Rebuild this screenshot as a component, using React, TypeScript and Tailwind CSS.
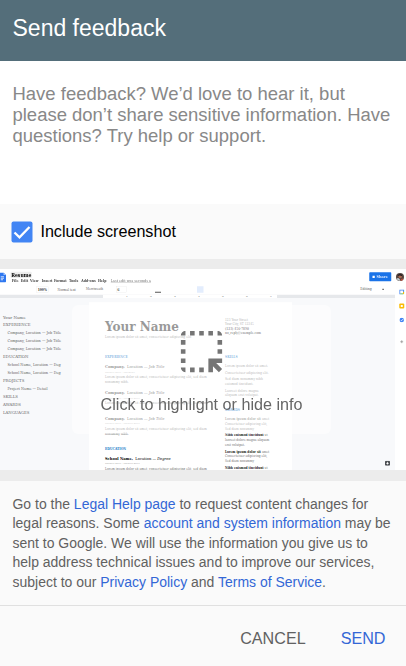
import React from "react";

type Line = { t: React.ReactNode; c: string };

const serif = "font-['DejaVu_Serif','Liberation_Serif',serif]";

const outline: Line[] = [
  { t: "Your Name", c: "text-[16px]" },
  { t: "EXPERIENCE", c: "text-[15.5px]" },
  { t: "Company, Location — Job Title", c: "pl-[18px] text-[13.8px]" },
  { t: "Company, Location — Job Title", c: "pl-[18px] text-[13.8px]" },
  { t: "Company, Location — Job Title", c: "pl-[18px] text-[13.8px]" },
  { t: "EDUCATION", c: "text-[15.5px]" },
  { t: "School Name, Location — Deg", c: "pl-[18px] text-[13.8px]" },
  { t: "School Name, Location — Deg", c: "pl-[18px] text-[13.8px]" },
  { t: "PROJECTS", c: "text-[15.5px]" },
  { t: "Project Name — Detail", c: "pl-[18px] text-[13.8px]" },
  { t: "SKILLS", c: "text-[15.5px]" },
  { t: "AWARDS", c: "text-[15.5px]" },
  { t: "LANGUAGES", c: "text-[15.5px]" },
];

const job = (
  <>
    <b>Company,</b>&nbsp; Location — <i>Job Title</i>
  </>
);
const lorem = "Lorem ipsum dolor sit amet, consectetuer adipiscing elit, sed diam";
const jobC = "h-[20px] text-[14.5px] text-[#333]";
const dateC = "h-[22px] text-[9px] text-[#888]";
const bodyC = "h-[20px] text-[12px] text-[#777]";
const headC = "h-[20px] text-[12px] font-bold text-[#2079c7]";

const mainLines: Line[] = [
  { t: "Your Name", c: "h-[60px] text-[48px] font-bold text-[#333]" },
  { t: "Lorem ipsum dolor sit amet, consectetuer adipiscing elit", c: "h-[20px] mt-[4px] text-[12px] text-[#777]" },
  { t: "EXPERIENCE", c: headC + " mt-[60px]" },
  { t: job, c: jobC + " mt-[17px]" },
  { t: "MONTH 20XX - PRESENT", c: dateC },
  { t: lorem, c: bodyC },
  { t: "nonummy nibh.", c: bodyC },
  { t: job, c: jobC + " mt-[22px]" },
  { t: "MONTH 20XX - MONTH 20XX", c: dateC },
  { t: lorem, c: bodyC },
  { t: job, c: jobC + " mt-[41px]" },
  { t: "MONTH 20XX - MONTH 20XX", c: dateC },
  { t: lorem, c: bodyC },
  { t: "nonummy nibh.", c: bodyC },
  { t: "EDUCATION", c: headC + " mt-[41px]" },
  {
    t: (
      <>
        <b>School Name,</b>&nbsp; Location — <i>Degree</i>
      </>
    ),
    c: "h-[20px] mt-[17px] text-[14.5px] text-black",
  },
  { t: "MONTH 20XX - MONTH 20XX", c: dateC },
  { t: lorem, c: bodyC },
];

const sideC = "h-[19px] text-[12px] text-[#777]";
const sideB = "h-[19px] text-[11.6px] text-[#777]";
const sideLines: Line[] = [
  { t: "123 Your Street", c: "h-[17px] text-[11.5px] text-[#666]" },
  { t: "Your City, ST 12345", c: "h-[17px] text-[11.5px] text-[#666]" },
  { t: "(123) 456-7890", c: "h-[17px] text-[11px] font-bold text-[#444]" },
  { t: "no_reply@example.com", c: "h-[17px] text-[11px] font-bold text-[#444]" },
  { t: "SKILLS", c: headC + " mt-[77px]" },
  { t: "Lorem ipsum dolor sit amet.", c: sideC + " mt-[16px]" },
  { t: "Consectetuer adipiscing elit.", c: sideC + " mt-[8px]" },
  { t: "Sed diam nonummy nibh", c: sideC + " mt-[7px]" },
  { t: "euismod tincidunt.", c: sideC },
  { t: "Laoreet dolore magna", c: sideC + " mt-[8px]" },
  { t: "aliquam erat volutpat.", c: sideC },
  { t: "AWARDS", c: headC + " mt-[39px]" },
  { t: <><b>Lorem ipsum dolor sit</b> amet</>, c: sideB + " mt-[18px]" },
  { t: "Consectetuer adipiscing elit,", c: sideB },
  { t: "Sed diam nonummy", c: sideB },
  { t: <><b className="text-[#222]">Nibh euismod tincidunt</b> ut</>, c: sideB + " mt-[8px]" },
  { t: "laoreet dolore magna aliquam", c: sideB },
  { t: "erat volutpat.", c: sideB },
  { t: <><b className="text-[#222]">Lorem ipsum dolor sit</b> amet</>, c: sideB + " mt-[8px]" },
  { t: "Consectetuer adipiscing elit,", c: sideB },
  { t: "Sed diam nonummy", c: sideB },
  { t: <><b className="text-[#222]">Nibh euismod tincidunt</b> ut</>, c: sideB + " mt-[8px]" },
];

function Lines({ items }: { items: Line[] }) {
  return (
    <>
      {items.map((l, i) => (
        <div key={i} className={"flex shrink-0 items-center whitespace-nowrap " + l.c}>
          <span>{l.t}</span>
        </div>
      ))}
    </>
  );
}

const menu: [string, string][] = [
  ["File", "w-[36px]"],
  ["Edit", "w-[37px]"],
  ["View", "w-[47px]"],
  ["Insert", "w-[49px]"],
  ["Format", "w-[60px]"],
  ["Tools", "w-[49px]"],
  ["Add-ons", "w-[67px]"],
  ["Help", "w-[51px]"],
];

/* A document editor drawn at four times its shown size. */
function Editor() {
  return (
    <div className={"flex h-[804px] w-[1624px] origin-top-left scale-25 flex-col bg-white leading-none " + serif}>
      <div className="flex h-[60px] shrink-0">
        <svg className="-ml-[16px] mt-[14px] h-[40px] w-[40px] shrink-0" viewBox="0 0 40 40">
          <path d="M4 0h26l10 10v26a4 4 0 0 1-4 4H4z" fill="#2f78f0" />
          <path d="M30 0l10 10H30z" fill="#a5c5fb" />
          <path d="M19 17h13M19 23h13M19 29h9" stroke="#fff" strokeWidth="3" />
        </svg>
        <div className="ml-[18px] flex flex-col">
          <div className="mt-[11px] flex h-[25px] w-[85px] items-center rounded bg-[#eee] pl-[3px] text-[18px] font-bold text-black">Resume</div>
          <div className="mt-[1px] flex h-[22px] items-center whitespace-nowrap pl-[5px] text-[12.8px] font-bold text-[#444]">
            {menu.map(([m, w]) => (
              <span key={m} className={w}>{m}</span>
            ))}
            <span className="text-[13.4px] font-normal text-[#777] underline">Last edit was seconds a</span>
          </div>
        </div>
        <div className="ml-auto mt-[13px] flex h-[36px] w-[88px] items-center justify-center gap-[7px] rounded-[3px] bg-[#1a73e8] text-[14px] font-bold text-[#d8e7ff]">
          <span className="h-[9px] w-[9px] bg-white" />
          Share
        </div>
        <svg className="ml-[18px] mr-[7px] mt-[15px] h-[34px] w-[34px] shrink-0" viewBox="0 0 34 34">
          <circle cx="17" cy="17" r="16" fill="#55453f" />
          <path d="M3 24q10-8 16 8-10 2-16-8" fill="#c9d0d4" />
          <circle cx="18" cy="15" r="7" fill="#a8684f" />
          <path d="M7 13q5-13 17-6l2 7q-10-5-19-1" fill="#221b20" />
          <path d="M20 33q-2-10 7-10l4 2q-4 7-11 8" fill="#b84e3e" />
        </svg>
      </div>
      <div className="flex h-[744px]">
        <div className="flex w-[1580px] flex-col">
          <div className="flex h-[43px] shrink-0 items-center text-[13px] text-[#666]">
            <span className="ml-[144px] flex h-[22px] w-[50px] items-center justify-center border border-[#ddd] text-[12px] font-bold text-[#333]">100%</span>
            <span className="ml-[36px] w-[114px] whitespace-nowrap text-[12px]">Normal text</span>
            <span className="w-[122px] text-[11.5px]">Merriweath</span>
            <span className="flex h-[24px] w-[40px] items-center border border-[#ddd] pl-[2px] font-bold">6</span>
            <span className="ml-[114px] mt-[22px] h-[4px] w-[24px] bg-[#555]" />
            <span className="ml-[144px] h-[26px] w-[26px] bg-[#e3edfd]" />
            <span className="ml-auto w-[88px] text-[12.5px]">Editing</span>
            <span className="mr-[44px] h-[5px] w-[7px] bg-[#777]" />
          </div>
          <div className="flex h-[14px] shrink-0 bg-[#e6e8eb]">
            <div className="ml-[412px] flex w-[696px] items-center bg-white text-[10px] font-bold text-[#888]">
              <span className="ml-[92px] w-[96px]">1</span>
              <span className="w-[96px]">2</span>
              <span className="w-[96px]">3</span>
              <span className="w-[96px]">4</span>
              <span className="w-[96px]">5</span>
              <span className="w-[96px]">6</span>
              <span>7</span>
            </div>
          </div>
          <div className="flex h-[687px] bg-[#f8f9fb]">
            <div className="w-[248px] shrink-0 overflow-hidden pl-[12px] pt-[60px] text-[#666]">
              {outline.map((l, i) => (
                <div key={i} className={"flex h-[32px] items-center whitespace-nowrap " + l.c}>{l.t}</div>
              ))}
            </div>
            <div className="ml-[108px] mt-[16px] flex h-[671px] w-[812px] shrink-0 overflow-hidden bg-white">
              <div className="w-[480px] shrink-0 pl-[64px] pt-[66px]">
                <Lines items={mainLines} />
              </div>
              <div className="pl-[64px] pt-[63px]">
                <Lines items={sideLines} />
              </div>
            </div>
            <svg className="mb-[17px] ml-auto mr-[20px] h-[20px] w-[20px] shrink-0 self-end" viewBox="0 0 20 20">
              <rect width="20" height="20" rx="4" fill="#4c4f53" />
              <path d="M10 3l2 5 5 2-5 2-2 5-2-5-5-2 5-2z" fill="#fff" />
            </svg>
          </div>
        </div>
        <div className="flex w-[44px] flex-col items-center pl-[10px] pt-[22px]">
          <svg className="h-[20px] w-[20px]" viewBox="0 0 20 20">
            <path d="M0 0h16v4H4v16H0z" fill="#4285f4" />
            <path d="M16 0h4v16h-4z" fill="#2f73dc" />
            <path d="M4 16h12v4H4z" fill="#34a853" />
            <path d="M15 10h5v6l-5 4z" fill="#fbbc04" />
          </svg>
          <span className="mt-[36px] flex h-[20px] w-[20px] items-center justify-center rounded-sm bg-[#fbbc04]">
            <span className="h-[8px] w-[8px] bg-white" />
          </span>
          <svg className="mt-[36px] h-[20px] w-[20px]" viewBox="0 0 20 20">
            <circle cx="10" cy="10" r="9" fill="#4285f4" />
            <path d="M6 10l3 3 8-8" stroke="#fff" strokeWidth="3" fill="none" />
          </svg>
          <svg className="mt-[70px] h-[14px] w-[14px]" viewBox="0 0 16 16">
            <path d="M8 1v14M1 8h14" stroke="#888" strokeWidth="3" />
          </svg>
        </div>
      </div>
    </div>
  );
}

const link = "text-[#3367d6]";

export default function App() {
  return (
    <div className="flex h-[666px] w-[406px] flex-col overflow-hidden bg-[#fafafa] font-['Liberation_Sans',Arial,sans-serif]">
      <header className="flex h-[61px] shrink-0 bg-[#546e7a] pl-[12.5px] pt-[14px] text-[23px] leading-[28px] text-white">Send feedback</header>
      <div className="h-[143px] shrink-0 bg-white pl-[12.5px] pt-[22px] text-[18.48px] leading-[21px] text-[#888]">
        <p className="whitespace-nowrap">
          Have feedback? We’d love to hear it, but<br />
          please don’t share sensitive information. Have<br />
          questions? Try help or support.
        </p>
      </div>
      <div className="flex h-[55px] shrink-0 items-center pl-[11px] text-[16.15px] text-black">
        <svg className="h-[22px] w-[22px]" viewBox="0 0 22 22">
          <rect x="0.5" y="0.5" width="21" height="21" rx="2" fill="#4285f4" />
          <path d="M3.5 11.5l5 4.8L18.5 6" fill="none" stroke="#fff" strokeWidth="2.3" />
        </svg>
        <span className="ml-[7.4px]">Include screenshot</span>
      </div>
      <div className="h-[10px] shrink-0 bg-[#ececec]" />
      <div className="relative h-[201px] shrink-0 overflow-hidden">
        <Editor />
        <div className="absolute left-[72px] top-[36px] h-[129px] w-[259px] rounded-[6px] bg-white/50" />
        <div className="absolute inset-0 text-[#757575]">
          <svg className="ml-[174px] mt-[55px] h-[55px] w-[55px]" viewBox="0 0 24 24" fill="currentColor">
            <path d="M17 5h-2V3h2zM15 15h6v2h-2.59L21 19.59 19.59 21 17 18.41V21h-2zM19 9h2V7h-2zM19 13h2v-2h-2zM11 21h2v-2h-2zM7 5h2V3H7zM3 17h2v-2H3zM5 21v-2H3c0 1.1.9 2 2 2zM19 3v2h2c0-1.1-.9-2-2-2zM11 5h2V3h-2zM3 9h2V7H3zM7 21h2v-2H7zM3 13h2v-2H3zM3 5h2V3c-1.1 0-2 .9-2 2z" />
          </svg>
          <div className="-ml-[3px] mt-[15px] text-center text-[16.15px] leading-[20px] text-[#666]">Click to highlight or hide info</div>
        </div>
      </div>
      <div className="h-[11px] shrink-0 bg-[#ececec]" />
      <div className="h-[125px] shrink-0 border-b border-[#e0e0e0] pl-[12.5px] pt-[14px] text-[13.97px] leading-[19.4px] text-[#616161]">
        <p className="whitespace-nowrap">
          Go to the <a className={link}>Legal Help page</a> to request content changes for<br />
          legal reasons. Some <a className={link}>account and system information</a> may be<br />
          sent to Google. We will use the information you give us to<br />
          help address technical issues and to improve our services,<br />
          subject to our <a className={link}>Privacy Policy</a> and <a className={link}>Terms of Service</a>.
        </p>
      </div>
      <div className="flex h-[60px] shrink-0 items-center justify-end gap-[35px] pr-[20.5px] pt-[5px] text-[16.15px] text-[#616161]">
        <button>CANCEL</button>
        <button className={link}>SEND</button>
      </div>
    </div>
  );
}
